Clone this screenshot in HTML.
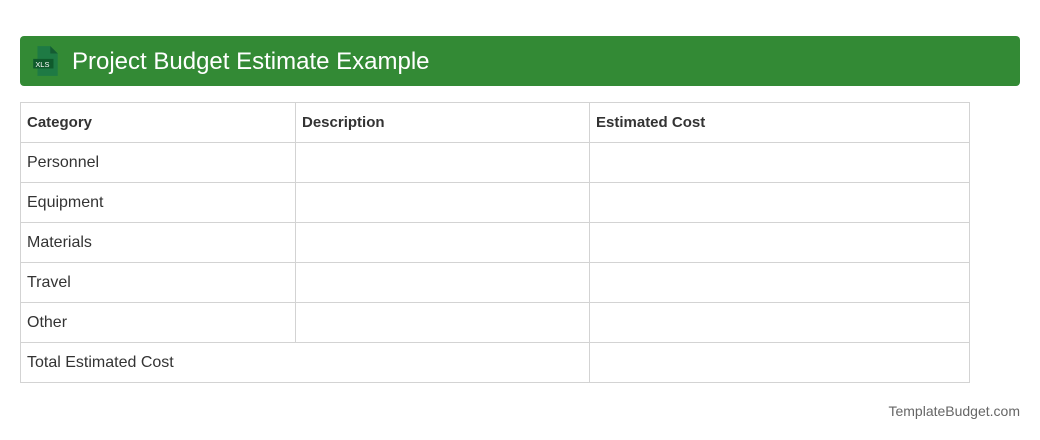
<!DOCTYPE html>
<html><head><style>
body{margin:0;width:1040px;height:440px;background:#fff;font-family:"Liberation Sans",sans-serif;position:relative}
.hdr{position:absolute;left:20px;top:36px;width:1000px;height:50px;background:#338a35;border-radius:4px}
.hdr span{position:absolute;left:52px;top:12px;color:#fff;font-size:24px}
.ico{position:absolute;left:10px;top:9px}
table{position:absolute;left:20px;top:102px;border-collapse:collapse;width:950px}
td{border:1px solid #d3d3d3;height:39px;padding:0 6px;font-size:16px;color:#333}
th{border:1px solid #d3d3d3;height:39px;padding:0 6px;font-size:15px;color:#333;text-align:left}
.ft{position:absolute;right:20px;top:403px;font-size:14px;color:#666}
</style></head><body>
<div class="hdr">
<svg class="ico" width="32" height="32" viewBox="0 0 30 30"><path d="M7 1h12l7 7v21H7z" fill="#1e7a44"/><path d="M19 1v7h7z" fill="#145c32"/><rect x="3" y="13" width="19" height="9" fill="#0f5a2c"/><text x="5" y="20.5" font-size="7" fill="#fff" font-family="Liberation Sans">XLS</text></svg>
<span>Project Budget Estimate Example</span></div>
<table>
<tr><th style="width:262px">Category</th><th style="width:281px">Description</th><th>Estimated Cost</th></tr>
<tr><td>Personnel</td><td></td><td></td></tr>
<tr><td>Equipment</td><td></td><td></td></tr>
<tr><td>Materials</td><td></td><td></td></tr>
<tr><td>Travel</td><td></td><td></td></tr>
<tr><td>Other</td><td></td><td></td></tr>
<tr><td colspan="2">Total Estimated Cost</td><td></td></tr>
</table>
<div class="ft">TemplateBudget.com</div>
</body></html>
